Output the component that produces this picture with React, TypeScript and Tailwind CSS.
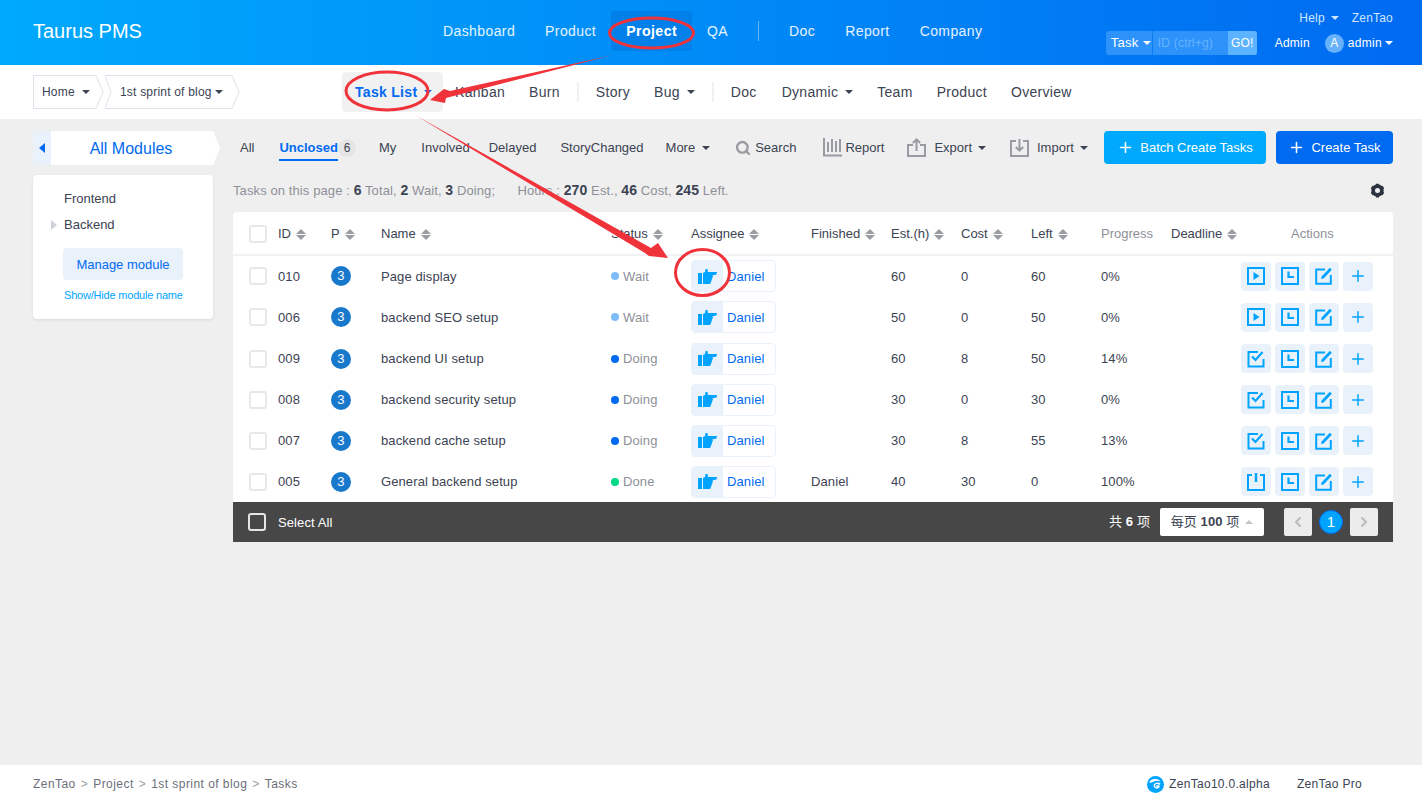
import { ChevronLeft, ChevronRight, Plus, Search } from "lucide-react";

const topNav = ["Dashboard", "Product", "Project", "QA", "|", "Doc", "Report", "Company"];

const tasks = [
  { id: "010", name: "Page display", status: "Wait", est: 60, cost: 0, left: 60, progress: "0%", finished: "", action: "start" },
  { id: "006", name: "backend SEO setup", status: "Wait", est: 50, cost: 0, left: 50, progress: "0%", finished: "", action: "start" },
  { id: "009", name: "backend UI setup", status: "Doing", est: 60, cost: 8, left: 50, progress: "14%", finished: "", action: "finish" },
  { id: "008", name: "backend security setup", status: "Doing", est: 30, cost: 0, left: 30, progress: "0%", finished: "", action: "finish" },
  { id: "007", name: "backend cache setup", status: "Doing", est: 30, cost: 8, left: 55, progress: "13%", finished: "", action: "finish" },
  { id: "005", name: "General backend setup", status: "Done", est: 40, cost: 30, left: 0, progress: "100%", finished: "Daniel", action: "close" },
];

const rowGrid = "grid grid-cols-[45px_53px_50px_230px_80px_120px_80px_70px_70px_70px_70px_70px_152px] items-center";

function Caret({ className = "border-t-[#3c4353]" }: { className?: string }) {
  return <span className={`inline-block w-0 h-0 border-x-[4px] border-x-transparent border-t-[4px] ${className}`} />;
}

function Sort() {
  return (
    <span className="inline-flex flex-col gap-[1px] ml-[5px] align-middle">
      <span className="w-0 h-0 border-x-[5px] border-x-transparent border-b-[5px] border-b-[#9a9ca3]" />
      <span className="w-0 h-0 border-x-[5px] border-x-transparent border-t-[5px] border-t-[#9a9ca3]" />
    </span>
  );
}

function Check({ dark }: { dark?: boolean }) {
  return (
    <span
      className={`block w-[18px] h-[18px] rounded-[3px] border-2 ${dark ? "border-[#e5e5e5]" : "border-[#e8e8e8] bg-white"}`}
    />
  );
}

function HandIcon() {
  return (
    <svg width="19" height="15" viewBox="0 0 19 15" fill="#00a4ff">
      <path d="M0 4h4v11H0z" />
      <path d="M5 4 7 3 7.500 0h2l.5 3h9l-.5 2.500-4.500 1 1 .5-1 3-1 3-1 2H5z" />
    </svg>
  );
}

function ActionIcon({ type }: { type: string }) {
  return (
    <svg width="18" height="18" viewBox="0 0 18 18" fill="none" stroke="#00a4ff" strokeWidth="2">
      {type === "start" && (
        <>
          <rect x="1" y="1" width="16" height="16" />
          <path d="M6.500 5v8l6-4z" fill="#00a4ff" stroke="none" />
        </>
      )}
      {type === "finish" && (
        <>
          <path d="M11 2H1.500v14.500h15V9" />
          <path d="m5 6.500 3.500 3.500L15.500 2" strokeWidth="2.200" />
        </>
      )}
      {type === "close" && (
        <>
          <path d="M5 2H1v15h16V2h-4" />
          <path d="M9 0v9" strokeWidth="2.500" />
        </>
      )}
      {type === "log" && (
        <>
          <rect x="1" y="1" width="16" height="16" />
          <path d="M7.500 4.500v5.500H13" strokeWidth="2.200" />
        </>
      )}
      {type === "edit" && (
        <>
          <path d="M10 2.500H1.200v14.300h14.600V8" />
          <path d="m6 12 .6-2.600L14.800.8l2 2-8.200 8.600z" fill="#00a4ff" stroke="none" />
        </>
      )}
    </svg>
  );
}

function ToolIcon({ type }: { type: string }) {
  return (
    <svg width="19" height="19" viewBox="0 0 19 19" fill="none" stroke="#9a9ca3" strokeWidth="2">
      {type === "report" && <path d="M1 0v17.500h18M5 4v10M9 1v13M13 3v11M17 1v13" />}
      {type === "export" && <path d="M6 7H1v11h17V7h-5M9.500 13V2M5.800 5 9.500 1.500 13.200 5" />}
      {type === "import" && <path d="M6 3H1v15h17V3h-5M9.500 1v11M5.800 9l3.700 3.500L13.200 9" />}
    </svg>
  );
}

function Gear() {
  return (
    <svg width="15" height="15" viewBox="0 0 24 24" fill="none" stroke="#2d3340">
      <circle cx="12" cy="12" r="7" strokeWidth="6" />
      <path d="M12 1v4M12 19v4M2.500 6.500l3.500 2M18 15.500l3.500 2M2.500 17.500l3.500-2M18 8.500l3.500-2" strokeWidth="5" />
    </svg>
  );
}

function Logo() {
  return (
    <svg width="17" height="17" viewBox="0 0 17 17">
      <circle cx="8.500" cy="8.500" r="8.500" fill="#00a4ff" />
      <path d="M2 7c1-3 4-4.500 7-4 2 .3 3.500 1.200 4.500 2.500C11 4.500 8 4.500 6 6z" fill="#fff" />
      <path d="M13.500 7.500c-1.500-1.200-4-1.400-5.500-.3-1.800 1.300-1.800 4 .2 5 1.500.7 3.500.3 4.300-1V9.300H9.300v1.400h1.400c-.5.600-1.500.6-2.100.1-.8-.7-.7-2 .2-2.500 1-.6 2.700-.2 3.600.6z" fill="#fff" />
    </svg>
  );
}

function Crumb({ width, notch, children }: { width: string; notch?: boolean; children: React.ReactNode }) {
  return (
    <div className={`relative flex items-center h-[34px] border-y border-[#dfe3ec] ${width} ${notch ? "" : "border-l"}`}>
      {notch && (
        <svg className="absolute left-0 top-[-1px]" width="8" height="34" fill="none" stroke="#dfe3ec">
          <path d="M0 .5 6 17 0 33.500" />
        </svg>
      )}
      {children}
      <svg className="absolute left-full top-[-1px]" width="8" height="34" fill="none" stroke="#dfe3ec">
        <path d="M0 .5 7 17 0 33.500" />
      </svg>
    </div>
  );
}

function SubLink({ label, caret, className = "" }: { label: string; caret?: boolean; className?: string }) {
  return (
    <span className={`flex items-center gap-[7px] ${className}`}>
      {label}
      {caret && <Caret />}
    </span>
  );
}

export default function App() {
  return (
    <div className="relative flex flex-col min-h-[798px] bg-[#efefef] text-[13px] text-[#3c4353] [font-family:Liberation_Sans,Noto_Sans_CJK_SC,sans-serif]">
      <header className="flex h-[65px] items-stretch bg-gradient-to-r from-[#00a9fc] to-[#006af1] pr-[29px] text-white">
        <div className="w-[428px] pl-[33px] pt-[18px] text-[20px] leading-[26px]">Taurus PMS</div>
        <nav className="flex items-center h-[40px] mt-[11px] text-[14px] tracking-[0.4px]">
          {topNav.map((item) =>
            item === "|" ? (
              <span key={item} className="w-px h-[20px] mx-[15px] bg-white/40" />
            ) : (
              <span
                key={item}
                className={`px-[15px] h-[40px] leading-[40px] rounded-[3px] ${
                  item === "Project" ? "font-bold text-[14.2px] bg-[#0080e8]" : "text-white/90"
                }`}
              >
                {item}
              </span>
            )
          )}
        </nav>
        <div className="ml-auto flex flex-col items-end pt-[10px] text-[12px] tracking-[0.2px]">
          <div className="flex items-center h-[16px] text-[#cfe6ff]">
            <span>Help</span>
            <Caret className="ml-[6px] border-t-[#cfe6ff]" />
            <span className="ml-[13px]">ZenTao</span>
          </div>
          <div className="flex items-center mt-[5px] h-[24px]">
            <div className="flex h-[24px] w-[151px] rounded-[3px] overflow-hidden bg-[#2e92fb]">
              <span className="flex items-center gap-[5px] w-[47px] pl-[5px] border-r border-[#0a7cf0] text-[13px]">
                Task
                <Caret className="border-t-white" />
              </span>
              <span className="flex-1 pl-[5px] leading-[24px] text-[#66b4ff]">ID (ctrl+g)</span>
              <span className="w-[29px] text-center leading-[24px] bg-[#5cb3ff]">GO!</span>
            </div>
            <span className="ml-[18px]">Admin</span>
            <span className="ml-[15px] w-[19px] h-[19px] rounded-full bg-[#66b1fc] text-center leading-[19px]">A</span>
            <span className="ml-[4px] tracking-[0.3px]">admin</span>
            <Caret className="ml-[3px] border-t-white" />
          </div>
        </div>
      </header>

      <div className="flex h-[54px] items-center bg-white pl-[33px] text-[14px] tracking-[0.3px]">
        <div className="flex w-[309px] text-[12px] tracking-[0.2px]">
          <Crumb width="w-[63px]">
            <span className="flex items-center gap-[7px] pl-[8px]">
              Home
              <Caret />
            </span>
          </Crumb>
          <div className="w-[9px]" />
          <Crumb width="w-[127px]" notch>
            <span className="flex items-center gap-[3px] pl-[15px]">
              1st sprint of blog
              <Caret />
            </span>
          </Crumb>
        </div>
        <div className="flex items-center h-[40px] w-[101px] pl-[13px] gap-[7px] rounded-[4px] bg-[#f1f1f1] text-[#006af1] font-bold">
          Task List
          <Caret className="border-t-[#006af1]" />
        </div>
        <SubLink label="Kanban" className="ml-[12px]" />
        <SubLink label="Burn" className="ml-[24px]" />
        <span className="w-[2px] h-[20px] mx-[17px] bg-[#f1f1f1]" />
        <SubLink label="Story" />
        <SubLink label="Bug" caret className="ml-[24px]" />
        <span className="w-[2px] h-[20px] mx-[17px] bg-[#f1f1f1]" />
        <SubLink label="Doc" />
        <SubLink label="Dynamic" caret className="ml-[25px]" />
        <SubLink label="Team" className="ml-[24px]" />
        <SubLink label="Product" className="ml-[24px]" />
        <SubLink label="Overview" className="ml-[24px]" />
      </div>

      <main className="flex flex-1 pr-[29px] pl-[33px] pt-[12px] gap-[13px]">
        <aside className="w-[187px] shrink-0">
          <div className="flex h-[34px]">
            <span className="flex items-center justify-center w-[18px] bg-[#e9f2fb]">
              <span className="w-0 h-0 border-y-[5px] border-y-transparent border-r-[6px] border-r-[#006af1]" />
            </span>
            <span className="flex-1 bg-white text-center leading-[36px] text-[16px] text-[#006af1] [clip-path:polygon(0_0,96%_0,100%_50%,96%_100%,0_100%)] pr-[9px]">
              All Modules
            </span>
          </div>
          <div className="w-[180px] h-[144px] mt-[10px] rounded-[4px] bg-white shadow-[0_1px_3px_rgba(0,0,0,0.1)] pt-[11px]">
            <div className="pl-[31px] h-[26px] leading-[26px]">Frontend</div>
            <div className="flex items-center pl-[18px] h-[26px]">
              <span className="w-0 h-0 border-y-[5px] border-y-transparent border-l-[6px] border-l-[#cdd2db] mr-[7px]" />
              Backend
            </div>
            <div className="ml-[30px] mt-[10px] w-[120px] h-[32px] rounded-[4px] bg-[#e9f2fb] text-center leading-[33px] text-[#006af1]">
              Manage module
            </div>
            <div className="pl-[31px] mt-[8px] text-[11px] leading-[14px] tracking-[-0.2px] text-[#00a4ff]">Show/Hide module name</div>
          </div>
        </aside>

        <section className="flex-1 min-w-0">
          <div className="flex items-center h-[33px] pl-[7px]">
            <span>All</span>
            <span className="relative ml-[25px] h-[33px] leading-[33px] font-bold text-[#006af1]">
              Unclosed
              <span className="absolute left-0 right-0 top-[28px] h-[2px] bg-[#006af1]" />
            </span>
            <span className="w-[18px] h-[18px] rounded-full bg-[#e5e5e5] text-center leading-[18px] text-[12px]">6</span>
            <span className="ml-[23px]">My</span>
            <span className="ml-[25px]">Involved</span>
            <span className="ml-[19px]">Delayed</span>
            <span className="ml-[24px]">StoryChanged</span>
            <SubLink label="More" caret className="ml-[22px]" />
            <Search className="ml-[25px] text-[#9a9ca3]" size={16} strokeWidth={3.5} />
            <span className="ml-[4px]">Search</span>
            <span className="ml-[27px]"><ToolIcon type="report" /></span>
            <span className="ml-[3px]">Report</span>
            <span className="ml-[23px]"><ToolIcon type="export" /></span>
            <span className="ml-[8px] mr-[6px]">Export</span>
            <Caret />
            <span className="ml-[24px]"><ToolIcon type="import" /></span>
            <span className="ml-[8px] mr-[6px]">Import</span>
            <Caret />
            <span className="flex items-center justify-center gap-[6px] ml-auto w-[162px] shrink-0 h-[33px] rounded-[4px] bg-[#00a9fc] text-white">
              <Plus size={17} strokeWidth={2.2} />
              Batch Create Tasks
            </span>
            <span className="flex items-center justify-center gap-[6px] ml-[10px] w-[117px] shrink-0 h-[33px] rounded-[4px] bg-[#006af1] text-white">
              <Plus size={17} strokeWidth={2.2} />
              Create Task
            </span>
          </div>

          <div className="flex items-center h-[48px] pt-[4px] text-[13px] text-[#8e9098] tracking-[0.1px]">
            <span className="whitespace-pre">
              Tasks on this page : <b className="text-[14px] text-[#3c4353]">6</b> Total, <b className="text-[14px] text-[#3c4353]">2</b> Wait, <b className="text-[14px] text-[#3c4353]">3</b> Doing;{"      "}Hours : <b className="text-[14px] text-[#3c4353]">270</b> Est., <b className="text-[14px] text-[#3c4353]">46</b> Cost, <b className="text-[14px] text-[#3c4353]">245</b> Left.
            </span>
            <span className="ml-auto mr-[8px]"><Gear /></span>
          </div>

          <div className="bg-white rounded-t-[4px]">
            <div className={`${rowGrid} h-[43.8px] pt-[2px] border-b-2 border-[#f0f2f5]`}>
              <span className="pl-[16px]"><Check /></span>
              <span>ID<Sort /></span>
              <span>P<Sort /></span>
              <span>Name<Sort /></span>
              <span>Status<Sort /></span>
              <span>Assignee<Sort /></span>
              <span>Finished<Sort /></span>
              <span>Est.(h)<Sort /></span>
              <span>Cost<Sort /></span>
              <span>Left<Sort /></span>
              <span className="text-[#8e9098]">Progress</span>
              <span>Deadline<Sort /></span>
              <span className="pl-[50px] text-[#8e9098]">Actions</span>
            </div>
            {tasks.map((t) => (
              <div key={t.id} className={`${rowGrid} h-[41.1px] tracking-[0.1px]`}>
                <span className="pl-[16px]"><Check /></span>
                <span>{t.id}</span>
                <span className="block w-[20px] h-[20px] rounded-full bg-[#1878cc] text-center leading-[20px] text-white">3</span>
                <span>{t.name}</span>
                <span className="flex items-center gap-[4px] text-[#8e9098]">
                  <span
                    className={`w-[8px] h-[8px] rounded-full ${
                      t.status === "Wait" ? "bg-[#7dbcf9]" : t.status === "Doing" ? "bg-[#006af1]" : "bg-[#00da88]"
                    }`}
                  />
                  {t.status}
                </span>
                <span className="flex items-center w-[85px] h-[32px] rounded-[4px] border border-[#e9f2fb] text-[#006af1]">
                  <span className="flex items-center justify-center w-[31px] h-[30px] bg-[#e9f2fb] rounded-l-[3px]">
                    <HandIcon />
                  </span>
                  <span className="ml-[4px]">Daniel</span>
                </span>
                <span>{t.finished}</span>
                <span>{t.est}</span>
                <span>{t.cost}</span>
                <span>{t.left}</span>
                <span>{t.progress}</span>
                <span />
                <span className="flex gap-[4px]">
                  {[t.action, "log", "edit"].map((type) => (
                    <span key={type} className="flex items-center justify-center w-[30px] h-[29px] rounded-[4px] bg-[#e9f2fb]">
                      <ActionIcon type={type} />
                    </span>
                  ))}
                  <span className="flex items-center justify-center w-[30px] h-[29px] rounded-[4px] bg-[#e9f2fb] text-[#00a4ff]">
                    <Plus size={18} strokeWidth={2} />
                  </span>
                </span>
              </div>
            ))}
          </div>

          <div className="flex items-center h-[39.6px] bg-[#474747] pl-[15px] pr-[15px] text-white tracking-[0.1px]">
            <Check dark />
            <span className="ml-[12px] mt-[2px]">Select All</span>
            <span className="ml-auto whitespace-pre">共 <b>6</b> 项</span>
            <span className="flex items-center justify-center gap-[6px] ml-[10px] w-[104px] h-[28px] bg-white text-[#3c4353] rounded-[2px]">
              <span className="whitespace-pre">每页 <b>100</b> 项</span>
              <span className="w-0 h-0 border-x-[4px] border-x-transparent border-b-[4px] border-b-[#c4c6cb]" />
            </span>
            <span className="flex items-center justify-center ml-[20px] w-[28px] h-[28px] bg-[#ececec] rounded-[2px] text-[#bbb]">
              <ChevronLeft size={16} strokeWidth={3} />
            </span>
            <span className="ml-[7px] w-[24px] h-[24px] rounded-full bg-[#00a4ff] border border-[#006af1] text-center leading-[22px] text-[15px] text-white">
              1
            </span>
            <span className="flex items-center justify-center ml-[7px] w-[28px] h-[28px] bg-[#ececec] rounded-[2px] text-[#bbb]">
              <ChevronRight size={16} strokeWidth={3} />
            </span>
          </div>
        </section>
      </main>

      <footer className="flex items-center h-[33px] bg-white pl-[33px] pt-[5px] text-[12px] tracking-[0.45px] text-[#6b6f7a]">
        <span>ZenTao</span>
        <span className="mx-[5px] text-[#9a9ca3]">&gt;</span>
        <span>Project</span>
        <span className="mx-[5px] text-[#9a9ca3]">&gt;</span>
        <span>1st sprint of blog</span>
        <span className="mx-[5px] text-[#9a9ca3]">&gt;</span>
        <span>Tasks</span>
        <span className="flex items-center gap-[5px] ml-auto text-[#3c4353] tracking-[0.3px]">
          <Logo />
          ZenTao10.0.alpha
        </span>
        <span className="ml-[27px] mr-[60px] text-[#3c4353] tracking-[0.3px]">ZenTao Pro</span>
      </footer>

      {/* red annotations drawn over the screenshot */}
      <svg className="absolute left-0 top-0 pointer-events-none" width="1422" height="798" fill="none" stroke="#f0323a" strokeWidth="3">
        <ellipse cx="651.500" cy="33" rx="42" ry="15" />
        <ellipse cx="387" cy="91" rx="41" ry="19" />
        <ellipse cx="702.500" cy="272.500" rx="27" ry="23" />
        <path d="m613 55-163 36-6-2-14 11 15 3 1-5z" fill="#f0323a" stroke="none" />
        <path d="m415 115 236 133 7-5 10 15-19-2-4-3z" fill="#f0323a" stroke="none" />
      </svg>
    </div>
  );
}
